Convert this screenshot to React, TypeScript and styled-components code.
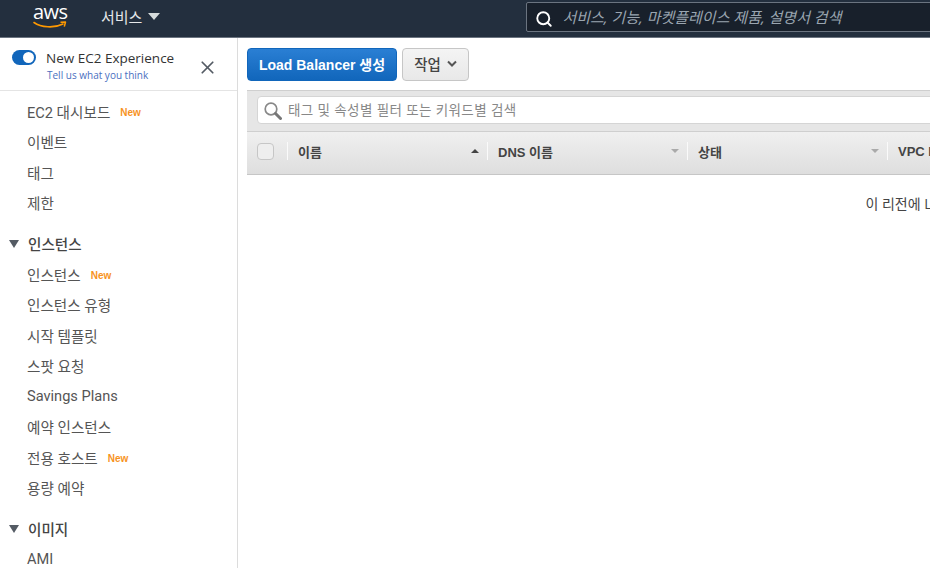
import React from 'react';
import styled, { createGlobalStyle } from 'styled-components';
import { Search, X } from 'lucide-react';

const GlobalStyle = createGlobalStyle`
  html, body { margin: 0; padding: 0; height: 100%; overflow: hidden; background: #fff; }
  body { font-family: "Open Sans", "Noto Sans CJK KR", sans-serif; color: #444; }
  * { box-sizing: border-box; }
`;

const Page = styled.div`
  width: 930px;
  height: 568px;
  overflow: hidden;
  display: flex;
  flex-direction: column;
`;

const TopBar = styled.header`
  height: 38px;
  flex: none;
  background: #232f3e;
  border-bottom: 1px solid #6b7480;
  display: flex;
  align-items: center;
  padding-left: 33px;
`;

const Logo = styled.div`
  width: 34px;
  height: 28px;
  position: relative;
  color: #fff;
  font: 20px/18px "Open Sans", sans-serif;
  letter-spacing: -0.5px;
  margin-top: -4px;
  svg { position: absolute; left: 0; top: 16px; }
`;

const ServicesMenu = styled.div`
  margin-left: 34px;
  display: flex;
  align-items: center;
  gap: 6px;
  font-size: 15px;
  color: #e6e8ea;
  margin-top: -5px;
  white-space: nowrap;
  flex: none;
`;

const Caret = styled.span<{ $color: string; $w: number; $h: number }>`
  width: 0;
  height: 0;
  border-left: ${p => p.$w}px solid transparent;
  border-right: ${p => p.$w}px solid transparent;
  border-top: ${p => p.$h}px solid ${p => p.$color};
`;

const GlobalSearch = styled.div`
  margin-left: 366px;
  margin-top: -3px;
  flex: none;
  width: 480px;
  height: 30px;
  background: #18202b;
  border: 1px solid #6b7480;
  border-radius: 2px;
  display: flex;
  align-items: center;
  padding-left: 8px;
  gap: 9px;
  color: #fff;
  font-size: 15px;
  font-style: italic;
  white-space: nowrap;
  span { color: #9aa5b0; margin-top: -2px; }
  svg { margin-top: 4px; }
`;

const Body = styled.div`
  flex: 1;
  display: flex;
  min-height: 0;
`;

const Sidebar = styled.aside`
  width: 238px;
  flex: none;
  border-right: 1px solid #dcdcdc;
  overflow: hidden;
`;

const Experience = styled.div`
  height: 53px;
  border-bottom: 1px solid #e4e4e4;
  display: flex;
  padding: 11px 0 0 12px;
  position: relative;
`;

const Toggle = styled.div`
  width: 24px;
  height: 15px;
  border-radius: 8px;
  background: #1166bb;
  position: relative;
  margin-top: 1px;
  &::after {
    content: '';
    position: absolute;
    right: 2px;
    top: 2px;
    width: 11px;
    height: 11px;
    border-radius: 50%;
    background: #fff;
  }
`;

const ExperienceText = styled.div`
  margin-left: 10px;
`;

const ExperienceTitle = styled.div`
  font-size: 13.5px;
  line-height: 18px;
  color: #333;
`;

const ExperienceLink = styled.div`
  font-size: 10px;
  line-height: 14px;
  color: #4a6fc0;
  margin: 1px 0 0 1px;
`;

const CloseButton = styled.div`
  position: absolute;
  left: 197px;
  top: 19px;
  color: #545b64;
  display: flex;
`;

const Nav = styled.nav`
  padding-top: 5px;
`;

const NavItem = styled.div`
  height: 30.5px;
  padding-left: 27px;
  display: flex;
  align-items: center;
  font: 14.6px "Roboto", "Noto Sans CJK KR", sans-serif;
  color: #555;
`;

const NewBadge = styled.span`
  color: #f7931e;
  font: bold 10px "Liberation Sans", sans-serif;
  margin-left: 10px;
  margin-top: 3px;
`;

const NavSection = styled.div`
  height: 30.5px;
  margin-top: 10.5px;
  padding-left: 9px;
  display: flex;
  align-items: center;
  gap: 9px;
  font: 500 14.6px "Roboto", "Noto Sans CJK KR", sans-serif;
  color: #444;
`;

const Main = styled.main`
  flex: 1;
  min-width: 0;
  overflow: hidden;
  padding-left: 9px;
`;

const Actions = styled.div`
  display: flex;
  gap: 5px;
  padding-top: 10px;
  height: 52px;
`;

const PrimaryButton = styled.button`
  width: 150px;
  height: 33px;
  padding: 0 0 2px;
  border: 1px solid #1166bb;
  border-radius: 4px;
  background: linear-gradient(#2a7fd4, #1166bb);
  color: #fff;
  font: bold 14px "Liberation Sans", "Noto Sans CJK KR", sans-serif;
  white-space: nowrap;
`;

const SecondaryButton = styled.button`
  width: 67px;
  height: 33px;
  padding: 0 0 2px;
  border: 1px solid #c6c6c6;
  border-radius: 4px;
  background: linear-gradient(#f4f4f4, #e8e8e8);
  color: #444;
  font: 500 14.5px "Liberation Sans", "Noto Sans CJK KR", sans-serif;
  display: flex;
  align-items: center;
  justify-content: center;
  gap: 6px;
`;

const Panel = styled.div`
  width: 1460px;
`;

const FilterBar = styled.div`
  height: 41px;
  background: #e6e6e6;
  border-top: 1px solid #cfcfcf;
  padding: 5px 0 0 10px;
`;

const FilterInput = styled.div`
  height: 28px;
  background: #fff;
  border: 1px solid #d5d5d5;
  border-radius: 4px;
  display: flex;
  align-items: center;
  padding: 0 0 2px 6px;
  gap: 6px;
  font-size: 13.5px;
  color: #888;
  letter-spacing: 0.4px;
  svg { margin-top: 4px; }
`;

const TableHead = styled.div`
  height: 44px;
  padding-bottom: 4px;
  background: linear-gradient(#f0f0f0, #dedede);
  border-top: 1px solid #cfcfcf;
  border-bottom: 1px solid #c6c6c6;
  display: flex;
  align-items: center;
`;

const CheckCell = styled.div`
  width: 40px;
  flex: none;
  padding-left: 10px;
`;

const CheckBox = styled.div`
  width: 17px;
  height: 17px;
  border: 1px solid #c6c6c6;
  border-radius: 4px;
  background: #eee;
`;

const HeadCell = styled.div`
  width: 200px;
  flex: none;
  height: 18px;
  border-left: 1px solid #fafafa;
  padding: 0 8px 0 10px;
  display: flex;
  align-items: center;
  justify-content: space-between;
  font: bold 13px "Liberation Sans", "Noto Sans CJK KR", sans-serif;
  color: #444;
`;

const SortUp = styled.span`
  width: 0;
  height: 0;
  border-left: 4px solid transparent;
  border-right: 4px solid transparent;
  border-bottom: 4px solid #444;
`;

const EmptyText = styled.div`
  text-align: center;
  padding-top: 18px;
  font-size: 14px;
  color: #444;
`;

const AwsSmile = () => (
  <svg width="34" height="12" viewBox="0 0 34 12" fill="none">
    <path d="M1 3.5C8 8.5 21 9.5 30 5" stroke="#f90" strokeWidth="1.6" strokeLinecap="round" />
    <path d="M27.5 3.2L32.5 3L31.3 7.6" stroke="#f90" strokeWidth="1.5" strokeLinejoin="round" />
  </svg>
);

const FilterIcon = () => (
  <svg width="18" height="18" viewBox="0 0 18 18" fill="none">
    <circle cx="7" cy="7" r="5.8" stroke="#888" strokeWidth="1.7" />
    <path d="M11.5 11.5L16.5 16.5" stroke="#777" strokeWidth="3" strokeLinecap="round" />
  </svg>
);

type Item = { label: string; isNew?: boolean };

const dashboardItems: Item[] = [
  { label: 'EC2 대시보드', isNew: true },
  { label: '이벤트' },
  { label: '태그' },
  { label: '제한' },
];

const instanceItems: Item[] = [
  { label: '인스턴스', isNew: true },
  { label: '인스턴스 유형' },
  { label: '시작 템플릿' },
  { label: '스팟 요청' },
  { label: 'Savings Plans' },
  { label: '예약 인스턴스' },
  { label: '전용 호스트', isNew: true },
  { label: '용량 예약' },
];

const NavItems = ({ items }: { items: Item[] }) => (
  <>
    {items.map(item => (
      <NavItem key={item.label}>
        {item.label}
        {item.isNew && <NewBadge>New</NewBadge>}
      </NavItem>
    ))}
  </>
);

const App: React.FC = () => (
  <Page>
    <GlobalStyle />
    <TopBar>
      <Logo>
        aws
        <AwsSmile />
      </Logo>
      <ServicesMenu>
        서비스
        <Caret $color="#d5dbdb" $w={6} $h={7} />
      </ServicesMenu>
      <GlobalSearch>
        <Search size={18} strokeWidth={2.5} />
        <span>서비스, 기능, 마켓플레이스 제품, 설명서 검색</span>
      </GlobalSearch>
    </TopBar>
    <Body>
      <Sidebar>
        <Experience>
          <Toggle />
          <ExperienceText>
            <ExperienceTitle>New EC2 Experience</ExperienceTitle>
            <ExperienceLink>Tell us what you think</ExperienceLink>
          </ExperienceText>
          <CloseButton>
            <X size={21} strokeWidth={2} />
          </CloseButton>
        </Experience>
        <Nav>
          <NavItems items={dashboardItems} />
          <NavSection>
            <Caret $color="#545b64" $w={5} $h={8} />
            인스턴스
          </NavSection>
          <NavItems items={instanceItems} />
          <NavSection>
            <Caret $color="#545b64" $w={5} $h={8} />
            이미지
          </NavSection>
          <NavItem>AMI</NavItem>
        </Nav>
      </Sidebar>
      <Main>
        <Actions>
          <PrimaryButton>Load Balancer 생성</PrimaryButton>
          <SecondaryButton>
            작업
            <svg width="10" height="7" viewBox="0 0 10 7" fill="none">
              <path d="M1 1.5L5 5.5L9 1.5" stroke="#555" strokeWidth="2" />
            </svg>
          </SecondaryButton>
        </Actions>
        <Panel>
          <FilterBar>
            <FilterInput>
              <FilterIcon />
              태그 및 속성별 필터 또는 키워드별 검색
            </FilterInput>
          </FilterBar>
          <TableHead>
            <CheckCell>
              <CheckBox />
            </CheckCell>
            <HeadCell>
              이름
              <SortUp />
            </HeadCell>
            <HeadCell>
              DNS 이름
              <Caret $color="#aaa" $w={4} $h={4} />
            </HeadCell>
            <HeadCell>
              상태
              <Caret $color="#aaa" $w={4} $h={4} />
            </HeadCell>
            <HeadCell>VPC ID</HeadCell>
          </TableHead>
          <EmptyText>이 리전에 Load Balancer가 없습니다.</EmptyText>
        </Panel>
      </Main>
    </Body>
  </Page>
);

export default App;
